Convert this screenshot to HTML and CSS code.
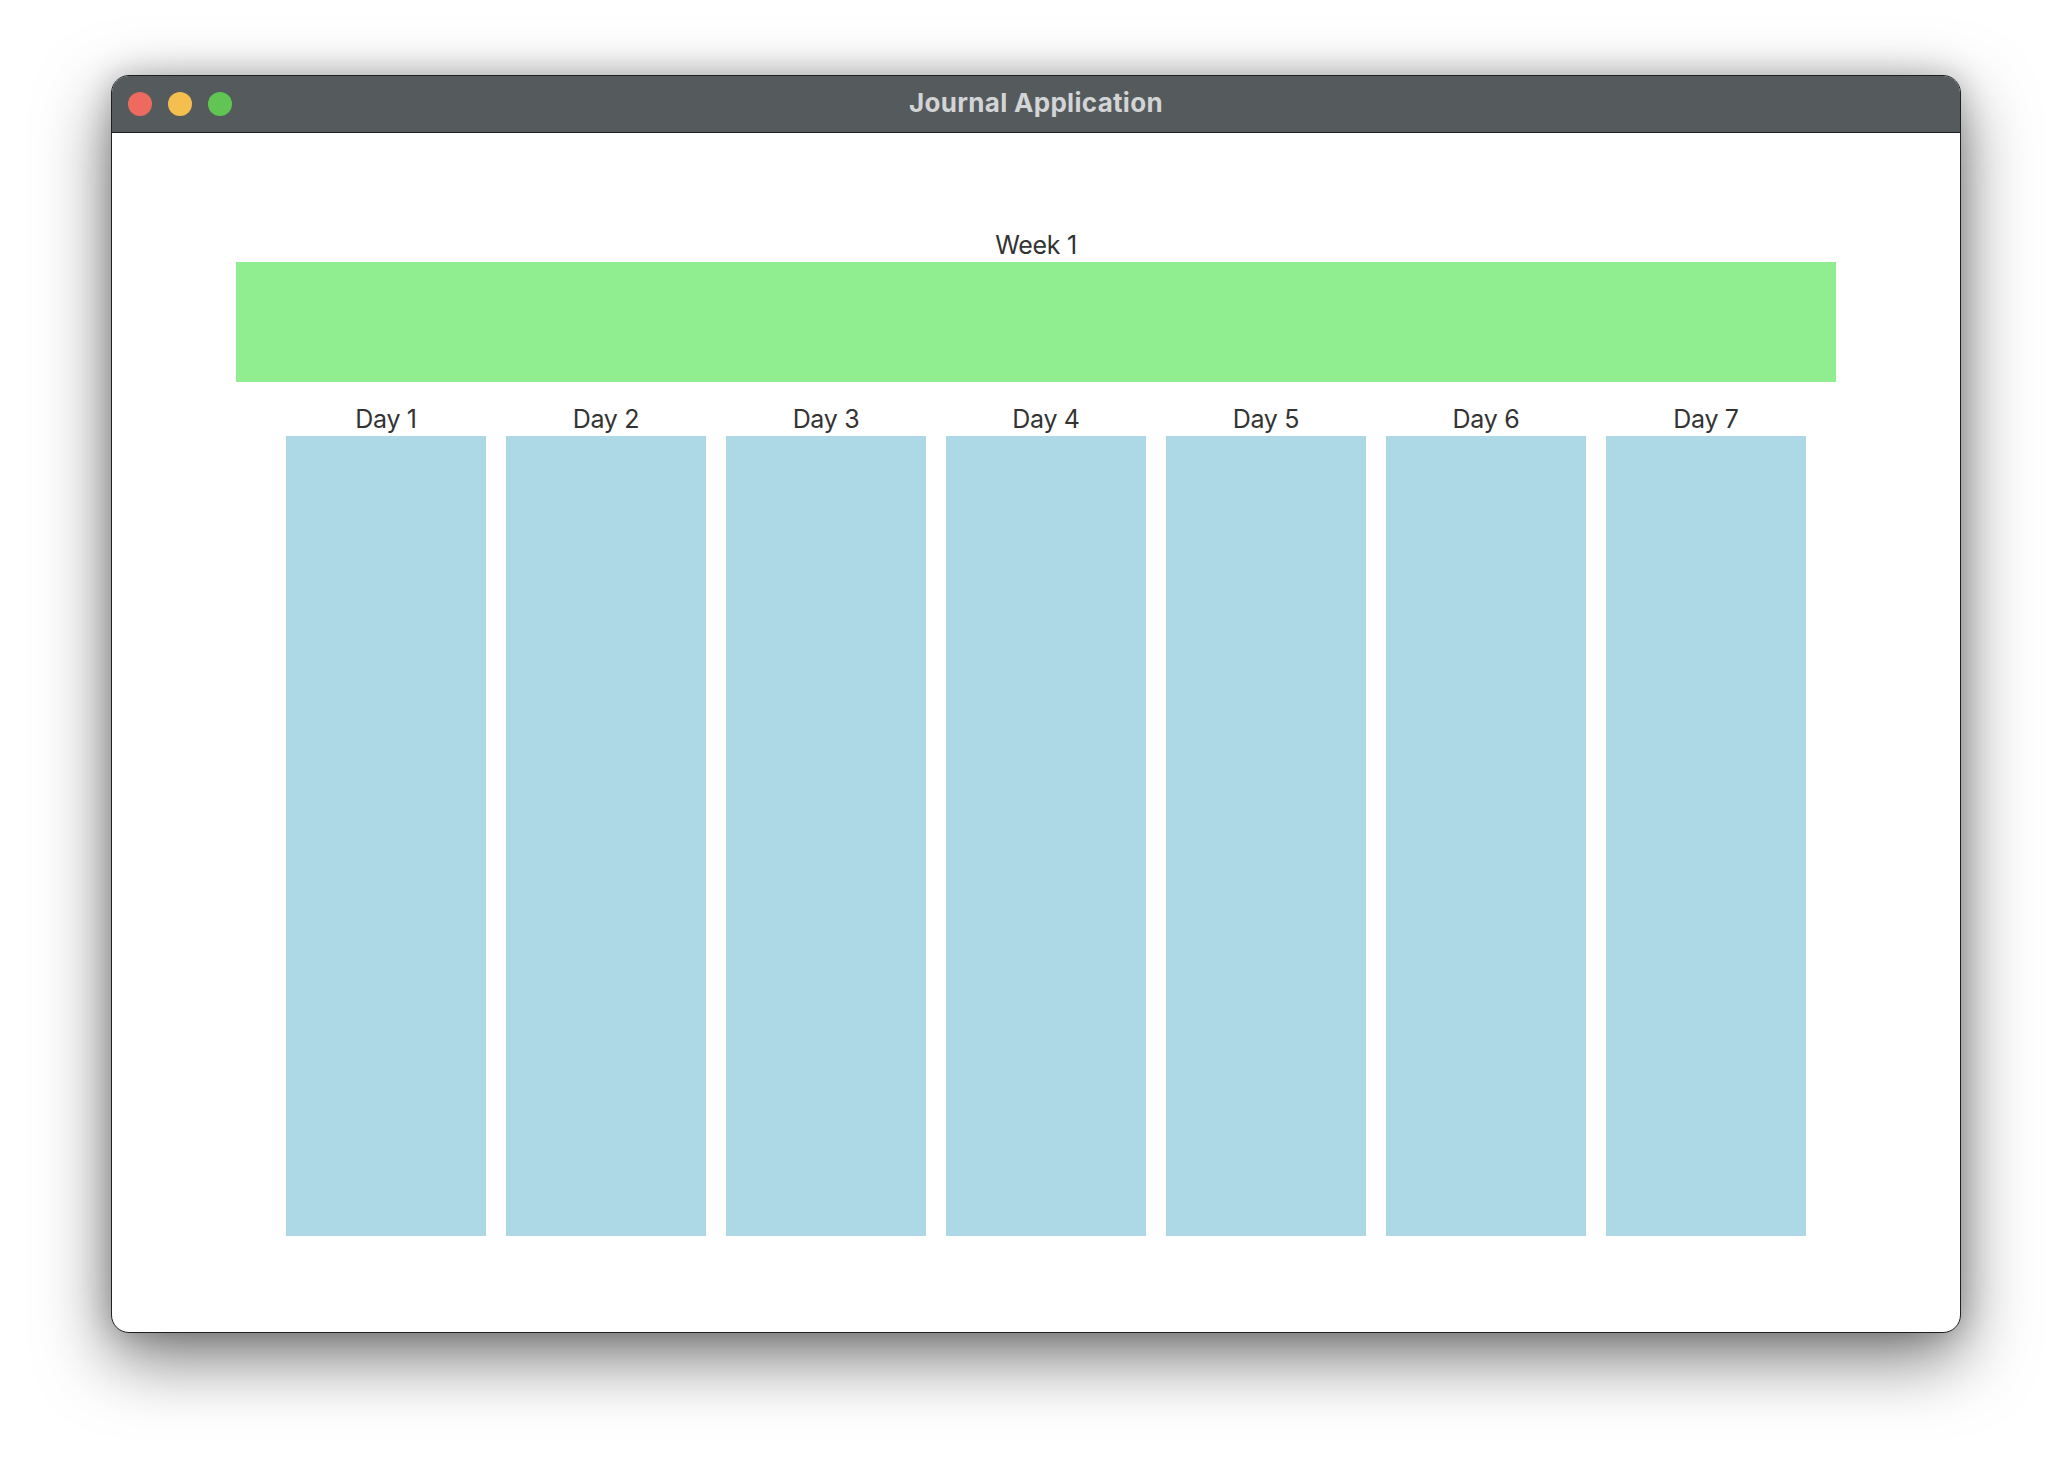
FILE: index.html
```html
<!DOCTYPE html>
<html>
<head>
<meta charset="utf-8">
<link rel="stylesheet" href="styles.css">
</head>
<body>
<div class="window">
  <div class="titlebar">
    <div class="lights">
      <span class="light red"></span>
      <span class="light yellow"></span>
      <span class="light green"></span>
    </div>
    <div class="title">Journal Application</div>
  </div>
  <div class="content">
    <div class="week">
      <div class="label">Week 1</div>
      <div class="week-bar"></div>
      <div class="days">
        <div class="day"><div class="label">Day 1</div><div class="day-box"></div></div>
        <div class="day"><div class="label">Day 2</div><div class="day-box"></div></div>
        <div class="day"><div class="label">Day 3</div><div class="day-box"></div></div>
        <div class="day"><div class="label">Day 4</div><div class="day-box"></div></div>
        <div class="day"><div class="label">Day 5</div><div class="day-box"></div></div>
        <div class="day"><div class="label">Day 6</div><div class="day-box"></div></div>
        <div class="day"><div class="label">Day 7</div><div class="day-box"></div></div>
      </div>
    </div>
  </div>
</div>
</body>
</html>
```

FILE: styles.css
```css
html, body {
  margin: 0;
  padding: 0;
  background: #ffffff;
}
body {
  width: 2072px;
  height: 1480px;
  padding-top: 75px;
  padding-left: 111px;
  box-sizing: border-box;
  font-family: Inter, "Noto Sans", sans-serif;
}
.window {
  width: 1850px;
  height: 1258px;
  box-sizing: border-box;
  border: 1px solid #1e1f20;
  border-radius: 18px;
  overflow: hidden;
  background: #ffffff;
  box-shadow: 0 24px 70px rgba(0, 0, 0, 0.55), 0 0 30px rgba(0, 0, 0, 0.2);
  display: flex;
  flex-direction: column;
}
.titlebar {
  height: 57px;
  flex: none;
  box-sizing: border-box;
  background: #555a5d;
  border-bottom: 1px solid #1e1f20;
  display: flex;
  align-items: center;
  position: relative;
}
.lights {
  display: flex;
  gap: 16px;
  padding-left: 16px;
  position: absolute;
  left: 0;
  top: 16px;
}
.light {
  width: 24px;
  height: 24px;
  border-radius: 50%;
  display: block;
}
.red { background: #ed6a5e; }
.yellow { background: #f5bf4f; }
.green { background: #61c554; }
.title {
  flex: 1;
  text-align: center;
  color: #d2d4d6;
  font-weight: 700;
  font-size: 26px;
  letter-spacing: 0.3px;
  line-height: 30px;
  padding-bottom: 2px;
}
.content {
  flex: 1;
  padding-left: 124px;
  padding-top: 95px;
}
.week {
  width: 1600px;
  display: flex;
  flex-direction: column;
}
.label {
  text-align: center;
  color: #333333;
  font-size: 25px;
  line-height: 34px;
  letter-spacing: -0.3px;
}
.week-bar {
  height: 120px;
  background: #90ee90;
}
.days {
  display: flex;
  gap: 20px;
  padding-left: 50px;
  margin-top: 20px;
}
.day {
  width: 200px;
  display: flex;
  flex-direction: column;
}
.day-box {
  height: 800px;
  background: #add8e6;
}
```
